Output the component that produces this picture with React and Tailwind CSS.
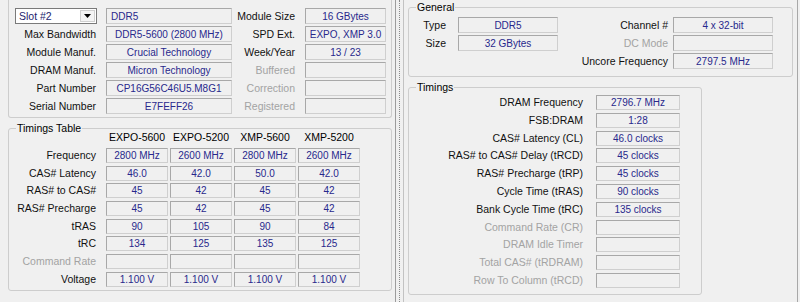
import clsx from "clsx";

const spdRows = [
  ["Max Bandwidth", "DDR5-5600 (2800 MHz)", "SPD Ext.", "EXPO, XMP 3.0", false],
  ["Module Manuf.", "Crucial Technology", "Week/Year", "13 / 23", false],
  ["DRAM Manuf.", "Micron Technology", "Buffered", "", true],
  ["Part Number", "CP16G56C46U5.M8G1", "Correction", "", true],
  ["Serial Number", "E7FEFF26", "Registered", "", true],
];

const profiles = ["EXPO-5600", "EXPO-5200", "XMP-5600", "XMP-5200"];

const timingTable = [
  ["Frequency", ["2800 MHz", "2600 MHz", "2800 MHz", "2600 MHz"]],
  ["CAS# Latency", ["46.0", "42.0", "50.0", "42.0"]],
  ["RAS# to CAS#", ["45", "42", "45", "42"]],
  ["RAS# Precharge", ["45", "42", "45", "42"]],
  ["tRAS", ["90", "105", "90", "84"]],
  ["tRC", ["134", "125", "135", "125"]],
  ["Command Rate", ["", "", "", ""], true],
  ["Voltage", ["1.100 V", "1.100 V", "1.100 V", "1.100 V"]],
];

const memTimings = [
  ["DRAM Frequency", "2796.7 MHz"],
  ["FSB:DRAM", "1:28"],
  ["CAS# Latency (CL)", "46.0 clocks"],
  ["RAS# to CAS# Delay (tRCD)", "45 clocks"],
  ["RAS# Precharge (tRP)", "45 clocks"],
  ["Cycle Time (tRAS)", "90 clocks"],
  ["Bank Cycle Time (tRC)", "135 clocks"],
  ["Command Rate (CR)", "", true],
  ["DRAM Idle Timer", "", true],
  ["Total CAS# (tRDRAM)", "", true],
  ["Row To Column (tRCD)", "", true],
];

function Box({ children, className }) {
  return (
    <div
      className={clsx(
        "flex items-center justify-center whitespace-nowrap border border-t-[#a8a8a8] border-l-[#a8a8a8] border-b-[#cfcfcf] border-r-[#cfcfcf] text-[10px] text-[#28288c]",
        className
      )}
    >
      {children}
    </div>
  );
}

function Label({ children, off, className }) {
  return (
    <div className={clsx("whitespace-nowrap text-right", off ? "text-[#a3a3a3]" : "text-[#111]", className)}>
      {children}
    </div>
  );
}

function SlotSelect() {
  return (
    <div className="flex h-[16px] w-[82px] items-center border border-[#7a7a7a] bg-white">
      <span className="flex-1 pl-[3px] text-[#1d1d6e]">Slot #2</span>
      <div className="m-[1px] flex h-[12px] w-[15px] items-center justify-center border border-[#d0d0d0] bg-[#f4f4f4]">
        <svg width="7" height="4" viewBox="0 0 7 4">
          <polygon points="0,0 7,0 3.5,4" fill="#000" />
        </svg>
      </div>
    </div>
  );
}

export default function App() {
  return (
    <div className="flex h-[302px] w-[800px] overflow-hidden bg-[#f0f0f0] font-['Liberation_Sans',Arial,sans-serif] text-[10.5px] leading-[13px]">
      {/* SPD tab */}
      <div className="w-[392px] pl-[8px]">
        <div className="flex h-[118px] flex-col gap-[2px] rounded-b-[3px] border border-t-0 border-[#cdcdcd] pl-[6px] pt-[8px]">
          <div className="flex h-[16px] items-center">
            <SlotSelect />
            <Box className="ml-[9px] h-[16px] w-[126px] justify-start pl-[4px]">DDR5</Box>
            <Label className="w-[73px] pr-[10px]">Module Size</Label>
            <Box className="h-[16px] w-[81px]">16 GBytes</Box>
          </div>
          {spdRows.map(([l, v, l2, v2, off]) => (
            <div key={l} className="flex h-[16px] items-center">
              <Label className="w-[82px] pr-[1px]">{l}</Label>
              <Box className="ml-[9px] h-[16px] w-[126px]">{v}</Box>
              <Label off={off} className="w-[73px] pr-[10px]">{l2}</Label>
              <Box className="h-[16px] w-[81px]">{v2}</Box>
            </div>
          ))}
        </div>

        <fieldset className="mt-[4px] h-[169px] rounded-[3px] border border-[#cdcdcd]">
          <legend className="ml-[7px] px-[1px] leading-[12px]">Timings Table</legend>
          <div className="-mt-[3px] flex h-[12px] items-center gap-[2px] pl-[97px]">
            {profiles.map((p) => (
              <div key={p} className="w-[62px] text-center">{p}</div>
            ))}
          </div>
          <div className="mt-[5px] flex flex-col gap-[2.7px]">
            {timingTable.map(([l, vals, off]) => (
              <div key={l} className="flex h-[15px] items-center">
                <Label off={off} className="w-[88px] pr-[1px]">{l}</Label>
                <div className="ml-[9px] flex gap-[2px]">
                  {vals.map((v, i) => (
                    <Box key={i} className="h-[15px] w-[62px]">{v}</Box>
                  ))}
                </div>
              </div>
            ))}
          </div>
        </fieldset>
      </div>

      {/* window edges between the two shots */}
      <div className="flex h-full w-[12px]">
        <div className="w-[3px]" />
        <div className="w-[1px] bg-[#9c9c9c]" />
        <div className="w-[3px]" />
        <div className="w-[1px] border-l border-dotted border-[#8a8a8a]" />
        <div className="w-[3px]" />
        <div className="w-[1px] bg-[#c2c2c2]" />
      </div>

      {/* Memory tab */}
      <div className="flex flex-1">
        <div className="w-[393px] pl-[4px]">
          <fieldset className="mt-[1px] h-[76px] w-[385px] rounded-[3px] border border-[#cdcdcd]">
            <legend className="ml-[7px] px-[1px] leading-[12px]">General</legend>
            <div className="mt-[4px] flex flex-col gap-[2px]">
              <div className="flex h-[16px] items-center">
                <Label className="w-[37px]">Type</Label>
                <Box className="ml-[12px] h-[16px] w-[100px]">DDR5</Box>
                <Label className="w-[115px] pr-[5px]">Channel #</Label>
                <Box className="h-[16px] w-[100px]">4 x 32-bit</Box>
              </div>
              <div className="flex h-[16px] items-center">
                <Label className="w-[37px]">Size</Label>
                <Box className="ml-[12px] h-[16px] w-[100px]">32 GBytes</Box>
                <Label off className="w-[115px] pr-[5px]">DC Mode</Label>
                <Box className="h-[16px] w-[100px]" />
              </div>
              <div className="flex h-[16px] items-center">
                <div className="w-[149px]" />
                <Label className="w-[115px] pr-[5px]">Uncore Frequency</Label>
                <Box className="h-[16px] w-[100px]">2797.5 MHz</Box>
              </div>
            </div>
          </fieldset>

          <fieldset className="mt-[4px] h-[214px] w-[294px] rounded-[3px] border border-[#cdcdcd]">
            <legend className="ml-[7px] px-[1px] leading-[12px]">Timings</legend>
            <div className="mt-[2px] flex flex-col gap-[2.8px]">
              {memTimings.map(([l, v, off]) => (
                <div key={l} className="flex h-[15px] items-center">
                  <Label off={off} className="w-[174px]">{l}</Label>
                  <Box className="ml-[13px] h-[15px] w-[84px]">{v}</Box>
                </div>
              ))}
            </div>
          </fieldset>
        </div>
        <div className="w-[1px] bg-[#a8a8a8]" />
      </div>
    </div>
  );
}
